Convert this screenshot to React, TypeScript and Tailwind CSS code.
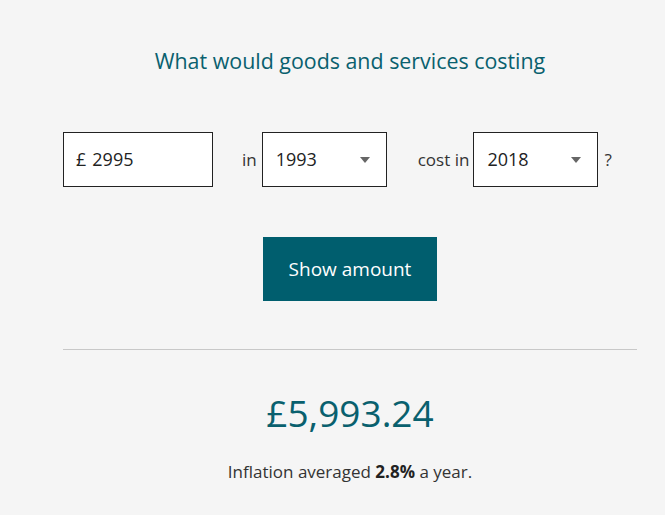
export default function App() {
  return (
    <div className="min-h-[515px] w-full bg-[#f5f5f5] font-['Open_Sans',sans-serif] text-[#333]">
      <div className="ml-[63px] w-[574px] pt-[44px]">
        <h2 className="text-center text-[21.4px] leading-[34px] text-[#09606e]">
          What would goods and services costing
        </h2>

        <div className="mt-[54px] flex items-center text-[17px]">
          <div className="flex h-[55px] w-[150px] items-center border border-[#222] bg-white px-[12px] text-[18px] text-[#222]">
            <span className="mr-[6px]">£</span>
            <span>2995</span>
          </div>
          <span className="ml-[29px] mr-[5px]">in</span>
          <div className="flex h-[55px] w-[125px] items-center justify-between border border-[#222] bg-white pl-[13px] pr-[16px] text-[18px] text-[#222]">
            <span>1993</span>
            <span className="h-0 w-0 border-x-[5px] border-t-[6px] border-x-transparent border-t-[#666]" />
          </div>
          <span className="ml-[31px] mr-[4px]">cost in</span>
          <div className="flex h-[55px] w-[125px] items-center justify-between border border-[#222] bg-white pl-[13px] pr-[16px] text-[18px] text-[#222]">
            <span>2018</span>
            <span className="h-0 w-0 border-x-[5px] border-t-[6px] border-x-transparent border-t-[#666]" />
          </div>
          <span className="ml-[6px]">?</span>
        </div>

        <div className="mt-[50px] flex justify-center">
          <button className="h-[64px] w-[174px] bg-[#005e6e] text-[19px] text-white">Show amount</button>
        </div>

        <hr className="mt-[48px] border-t border-[#c8c8c8]" />

        <div className="mt-[39px] text-center text-[37px] leading-[48px] text-[#09606e]">£5,993.24</div>
        <p className="mt-[22px] text-center text-[17px]">
          Inflation averaged <strong className="font-bold text-[#222]">2.8%</strong> a year.
        </p>
      </div>
    </div>
  );
}
